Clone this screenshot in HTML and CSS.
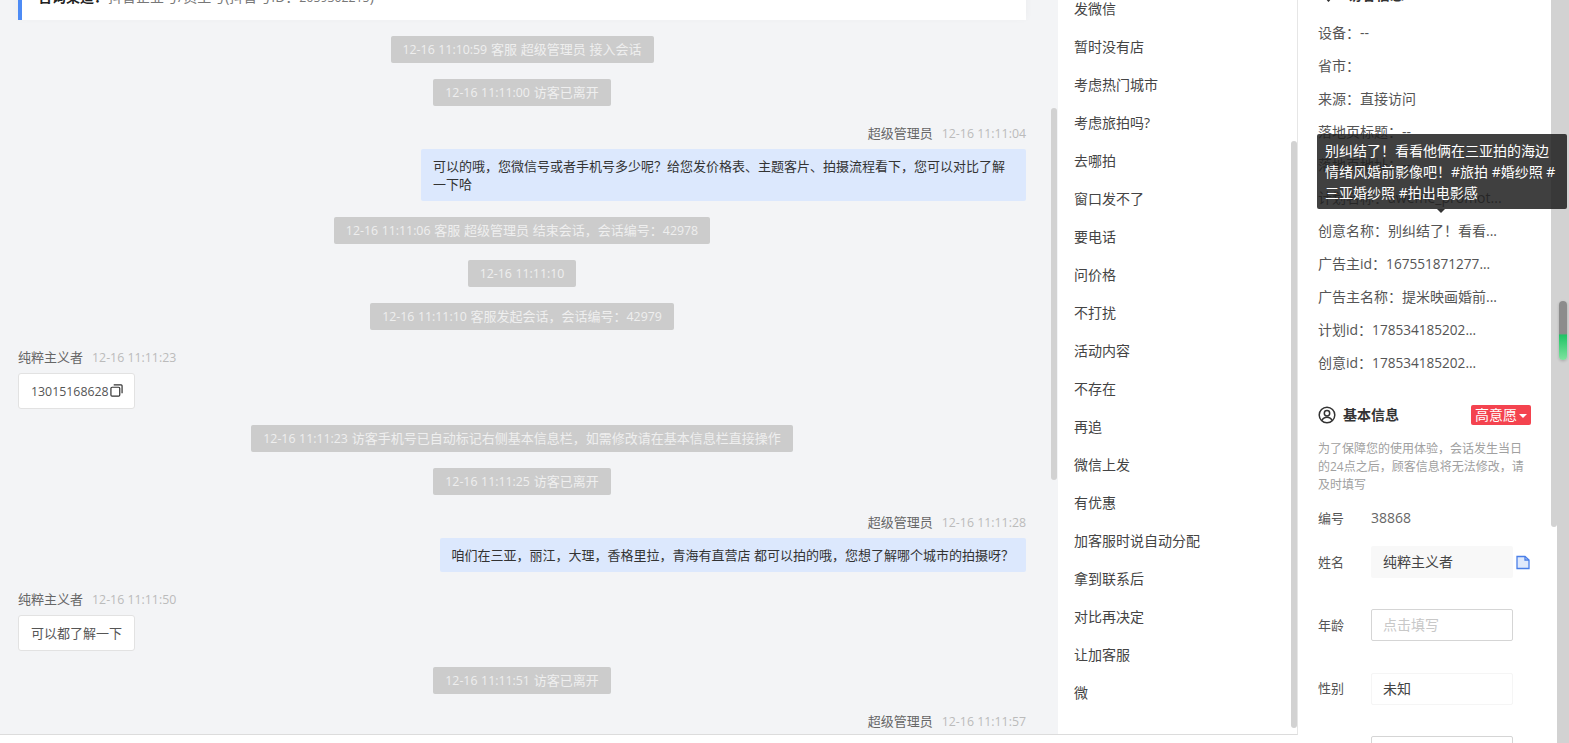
FILE: index.html
```html
<!DOCTYPE html>
<html lang="zh">
<head>
<meta charset="utf-8">
<title>会话</title>
<link rel="stylesheet" href="styles.css">
</head>
<body>
<div class="app">
  <main class="chat">
    <div class="notice"><b>咨询渠道：</b>抖音企业号/员工号(抖音号ID：<span class="n">2659302215</span>)</div>
    <div class="sys"><span class="n">12-16 11:10:59</span> 客服 超级管理员 接入会话</div>
    <div class="sys"><span class="n">12-16 11:11:00</span> 访客已离开</div>
    <div class="msg out">
      <div class="meta">超级管理员<span class="time n">12-16 11:11:04</span></div>
      <div class="bubble out-b wide">可以的哦，您微信号或者手机号多少呢？给您发价格表、主题客片、拍摄流程看下，您可以对比了解一下哈</div>
    </div>
    <div class="sys"><span class="n">12-16 11:11:06</span> 客服 超级管理员 结束会话，会话编号：<span class="n">42978</span></div>
    <div class="sys"><span class="n">12-16 11:11:10</span></div>
    <div class="sys"><span class="n">12-16 11:11:10</span> 客服发起会话，会话编号：<span class="n">42979</span></div>
    <div class="msg">
      <div class="meta">纯粹主义者<span class="time n">12-16 11:11:23</span></div>
      <div class="bubble in-b"><span class="n">13015168628</span><svg class="copy" viewBox="0 0 14 14" width="13" height="13"><rect x="1" y="3.5" width="9.5" height="9.5" rx="1.2" fill="none" stroke="#333" stroke-width="1.3"/><path d="M4 1h8a1 1 0 0 1 1 1v8" fill="none" stroke="#333" stroke-width="1.3"/></svg></div>
    </div>
    <div class="sys"><span class="n">12-16 11:11:23</span> 访客手机号已自动标记右侧基本信息栏，如需修改请在基本信息栏直接操作</div>
    <div class="sys"><span class="n">12-16 11:11:25</span> 访客已离开</div>
    <div class="msg out">
      <div class="meta">超级管理员<span class="time n">12-16 11:11:28</span></div>
      <div class="bubble out-b">咱们在三亚，丽江，大理，香格里拉，青海有直营店 都可以拍的哦，您想了解哪个城市的拍摄呀？</div>
    </div>
    <div class="msg">
      <div class="meta">纯粹主义者<span class="time n">12-16 11:11:50</span></div>
      <div class="bubble in-b">可以都了解一下</div>
    </div>
    <div class="sys"><span class="n">12-16 11:11:51</span> 访客已离开</div>
    <div class="msg out">
      <div class="meta">超级管理员<span class="time n">12-16 11:11:57</span></div>
    </div>
    <div class="thumb chat-thumb"></div>
  </main>

  <aside class="phrases">
    <ul class="phrase-list">
      <li>发微信</li><li>暂时没有店</li><li>考虑热门城市</li><li>考虑旅拍吗?</li><li>去哪拍</li><li>窗口发不了</li><li>要电话</li><li>问价格</li><li>不打扰</li><li>活动内容</li><li>不存在</li><li>再追</li><li>微信上发</li><li>有优惠</li><li>加客服时说自动分配</li><li>拿到联系后</li><li>对比再决定</li><li>让加客服</li><li>微</li>
    </ul>
    <div class="thumb phrase-thumb"></div>
  </aside>

  <section class="side">
    <div class="side-scroll">
      <h3 class="cut-title"><svg viewBox="0 0 12 16" width="11" height="15"><path d="M6 1a5 5 0 0 0-5 5c0 3.500 5 9 5 9s5-5.500 5-9a5 5 0 0 0-5-5z" fill="none" stroke="#333" stroke-width="1.600"/></svg>访客信息</h3>
      <ul class="facts">
        <li>设备：--</li>
        <li>省市：</li>
        <li>来源：直接访问</li>
        <li>落地页标题：--</li>
        <li>落地页地址：--</li>
        <li>计划名称：aweme_promot...</li>
        <li>创意名称：别纠结了！看看...</li>
        <li>广告主id：<span class="n">167551871277...</span></li>
        <li>广告主名称：提米映画婚前...</li>
        <li>计划id：<span class="n">178534185202...</span></li>
        <li>创意id：<span class="n">178534185202...</span></li>
      </ul>
      <div class="head">
        <svg viewBox="0 0 18 18" width="18" height="18"><circle cx="9" cy="9" r="7.800" fill="none" stroke="#333" stroke-width="1.500"/><circle cx="9" cy="7.300" r="2.700" fill="none" stroke="#333" stroke-width="1.500"/><path d="M4 14.500c1-2.500 3-3.300 5-3.300s4 .8 5 3.300" fill="none" stroke="#333" stroke-width="1.500"/></svg>
        <span class="head-title">基本信息</span>
        <span class="tag">高意愿<i class="caret"></i></span>
      </div>
      <p class="tip">为了保障您的使用体验，会话发生当日的24点之后，顾客信息将无法修改，请及时填写</p>
      <div class="field id-field"><label>编号</label><span class="id n">38868</span></div>
      <div class="field"><label>姓名</label><div class="inp filled">纯粹主义者</div>
        <svg class="doc" viewBox="0 0 14 15" width="14" height="15"><path d="M1 1.500h8l4 3.500v8.500H1z" fill="#dfe9fb" stroke="#4a7fe8" stroke-width="1.300"/><path d="M9 1.500v3.500h4" fill="none" stroke="#4a7fe8" stroke-width="1.300"/></svg>
      </div>
      <div class="field"><label>年龄</label><div class="inp empty">点击填写</div></div>
      <div class="field"><label>性别</label><div class="inp faint">未知</div></div>
      <div class="field"><label></label><div class="inp empty"></div></div>
    </div>
    <div class="side-thumb"></div>
    <div class="gutter"></div>
    <div class="meter"></div>
    <div class="tooltip">别纠结了！看看他俩在三亚拍的海边情绪风婚前影像吧！#旅拍 #婚纱照 #三亚婚纱照 #拍出电影感</div>
  </section>
</div>
</body>
</html>
```
FILE: styles.css
```css
* { box-sizing: border-box; }
html, body { margin: 0; padding: 0; height: 100%; overflow: hidden; }
body {
  font-family: "Open Sans", "Noto Sans CJK SC", sans-serif;
  font-size: 13px;
  color: #333;
  background: #fff;
}
ul { list-style: none; margin: 0; padding: 0; }
.app { display: flex; height: 743px; }
.n { font-size: .95em; }

/* chat */
.chat {
  position: relative;
  width: 1058px;
  height: 735px;
  flex: none;
  overflow: hidden;
  background: #f3f4f6;
  border-bottom: 1px solid #dcdcdc;
  padding: 0 32px 0 18px;
  display: flex;
  flex-direction: column;
  align-items: center;
  gap: 16px;
}
.notice {
  flex: none;
  align-self: stretch;
  height: 40px;
  margin-top: -20px;
  background: #fff;
  border-left: 4px solid #4d8bf5;
  padding: 7px 0 0 16px;
  font-size: 14px;
  line-height: 20px;
  color: #777;
  box-shadow: 0 -2px 8px rgba(0,0,0,.04);
}
.notice b { color: #222; font-weight: 700; }
.notice .n { font-size: 12.300px; }
.sys {
  flex: none;
  height: 27px;
  line-height: 27px;
  padding: 0 12px;
  background: #cccccc;
  color: #efefef;
  border-radius: 2px;
  white-space: nowrap;
  word-spacing: .4px;
}
.msg {
  flex: none;
  align-self: stretch;
  margin-top: 3px;
  display: flex;
  flex-direction: column;
  align-items: flex-start;
  gap: 8px;
}
.msg.out { align-items: flex-end; }
.meta { height: 16px; line-height: 16px; color: #666; white-space: nowrap; }
.time { margin-left: 9px; color: #bbb; }
.bubble { line-height: 18px; padding: 8px 12px; border-radius: 2px; }
.out-b { background: #dce8fd; color: #333; }
.wide { width: 605px; }
.in-b {
  width: 117px;
  height: 36px;
  line-height: 18px;
  background: #fff;
  border: 1px solid #e2e2e2;
  border-radius: 3px;
  color: #555;
  white-space: nowrap;
}
.copy { vertical-align: -1px; margin-left: 1px; }
.thumb { position: absolute; width: 6px; background: #d2d2d2; border-radius: 3px; }
.chat-thumb { right: 1px; top: 108px; height: 372px; }

/* phrases */
.phrases {
  position: relative;
  width: 240px;
  height: 735px;
  flex: none;
  overflow: hidden;
  background: #fff;
  border-right: 1px solid #e6e6e6;
  border-bottom: 1px solid #dcdcdc;
}
.phrase-list { margin-top: -10px; padding-left: 16px; }
.phrase-list li { height: 38px; line-height: 38px; font-size: 14px; color: #444; }
.phrase-thumb { right: 0; top: 141px; height: 587px; }

/* side */
.side { position: relative; flex: 1; min-width: 0; height: 743px; background: #fff; }
.side-scroll { height: 743px; overflow: hidden; padding: 0 38px 0 20px; }
.cut-title {
  margin: -13px 0 0;
  height: 29px;
  line-height: 16px;
  font-size: 14px;
  display: flex;
  gap: 14px;
  padding-left: 5px;
}
.facts li { height: 33px; line-height: 33px; font-size: 14px; color: #555; white-space: nowrap; }
.facts .n { font-size: 13.600px; }
.head { display: flex; align-items: center; height: 20px; margin-top: 26px; }
.head-title { margin-left: 7px; padding-bottom: 2px; font-size: 14px; font-weight: 700; color: #333; }
.tag {
  margin-left: auto;
  width: 60px;
  height: 20px;
  line-height: 20px;
  padding-left: 4px;
  font-size: 14px;
  background: #f4434f;
  color: #fff;
  border-radius: 2px;
  white-space: nowrap;
}
.caret {
  display: inline-block;
  margin-left: 2px;
  vertical-align: 2px;
  border: 4px solid transparent;
  border-top-color: #fff;
  border-bottom: 0;
}
.tip { margin: 15px 0 0; font-size: 12px; line-height: 18px; color: #a0a0a0; width: 214px; }
.field { display: flex; align-items: center; height: 32px; margin-bottom: 31.400px; position: relative; }
.id-field { height: 18px; margin-top: 15px; margin-bottom: 19px; }
.field label { width: 53px; flex: none; padding-bottom: 2px; color: #555; }
.id { padding-bottom: 2px; font-size: 14px; color: #666; }
.inp {
  width: 142px;
  height: 32px;
  line-height: 30px;
  padding: 0 11px;
  font-size: 14px;
  border: 1px solid transparent;
  border-radius: 2px;
  color: #444;
}
.filled { background: #f8f8f8; }
.empty { border-color: #d5d5d5; color: #c8c8c8; }
.faint { border-color: #f5f5f5; }
.doc { margin-left: 3px; }

.side-thumb { position: absolute; left: 253px; top: 0; width: 6px; height: 527px; background: #d2d2d2; border-radius: 0 0 3px 3px; }
.gutter { position: absolute; right: 0; top: 0; bottom: 0; width: 12px; background: #d2d2d2; }
.meter {
  position: absolute;
  left: 261px;
  top: 301px;
  width: 8px;
  height: 59px;
  border-radius: 4px;
  background: linear-gradient(#8c8c8c 0, #8c8c8c 55%, #1fc465 58%, #7fe39f 100%);
  box-shadow: 0 1px 3px rgba(0,0,0,.2);
}
.tooltip {
  position: absolute;
  left: 19px;
  top: 134px;
  width: 250px;
  height: 75px;
  padding: 6px 8px;
  font-size: 14px;
  line-height: 21px;
  word-break: break-all;
  color: #fff;
  background: rgba(30,30,30,.85);
  border-radius: 2px;
}
.tooltip::after {
  content: "";
  position: absolute;
  left: 120px;
  bottom: -4px;
  border: 4px solid transparent;
  border-top-color: #333;
  border-bottom: 0;
}
```
